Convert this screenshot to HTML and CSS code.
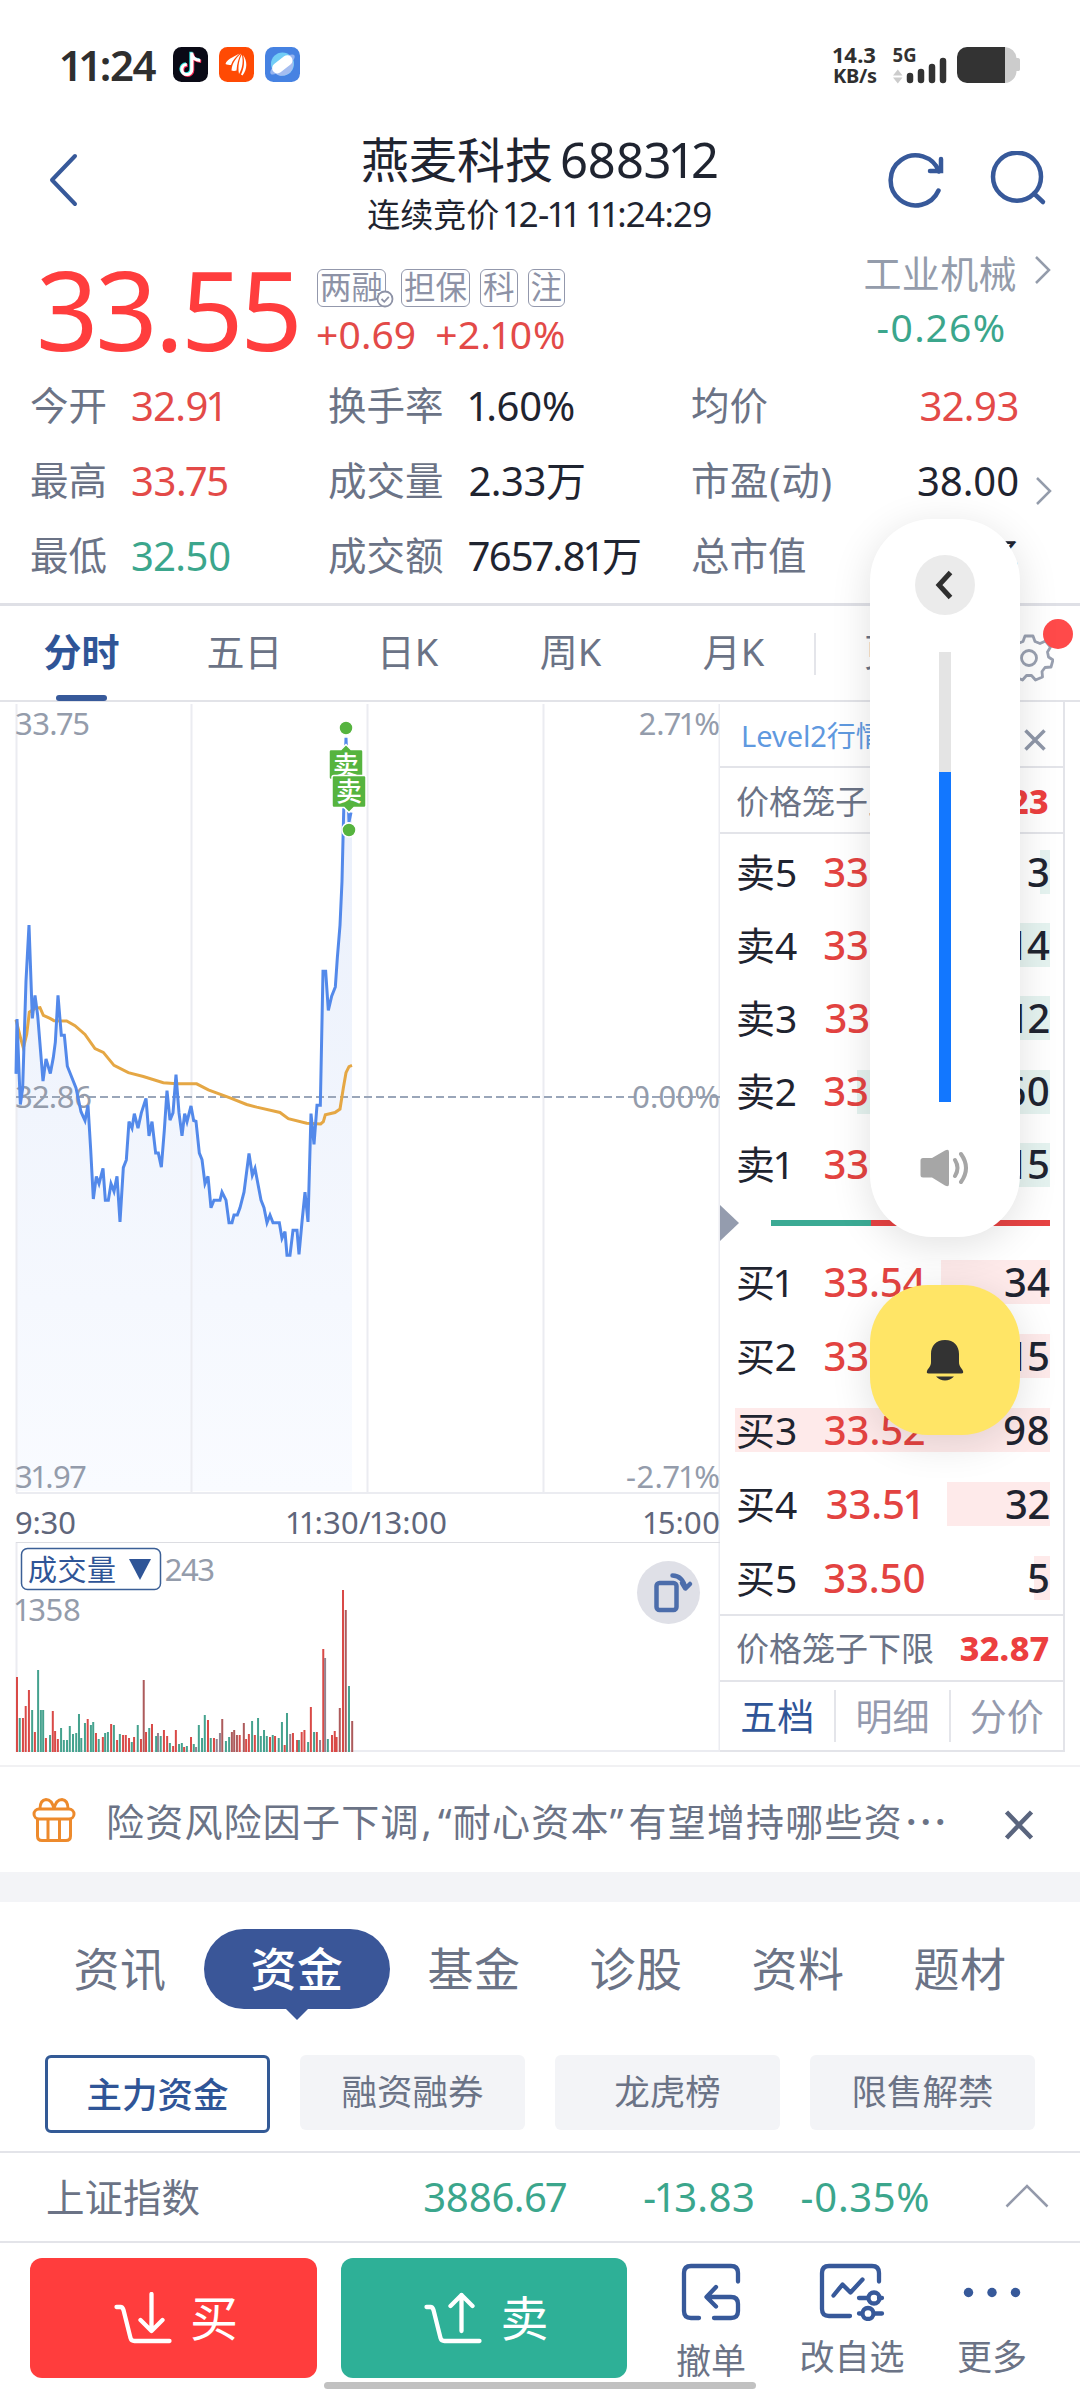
FILE: index.html
```html
<!DOCTYPE html>
<html lang="zh-CN">
<head>
<meta charset="utf-8">
<title>燕麦科技 688312</title>
<link rel="stylesheet" href="styles.css">
</head>
<body>
<div class="screen">
  <header class="status">
    <span class="clock">11:24</span>
    <svg class="app" viewBox="0 0 35 35"><rect width="35" height="35" rx="8.5" fill="#0a0a16"/><g fill="none"><path d="M18.800 5.500v17a5 5 0 1 1-5-5M18.800 7c.8 3.800 4 6.200 8.500 6.500" stroke="#25e5e0" stroke-width="3.200" transform="translate(-.9 -.7)"/><path d="M18.800 5.500v17a5 5 0 1 1-5-5M18.800 7c.8 3.800 4 6.200 8.500 6.500" stroke="#fb2a56" stroke-width="3.200" transform="translate(.9 .9)"/><path d="M18.800 5.500v17a5 5 0 1 1-5-5M18.800 7c.8 3.800 4 6.200 8.500 6.500" stroke="#fff" stroke-width="3.200"/></g></svg>
    <svg class="app" viewBox="0 0 35 35"><rect width="35" height="35" rx="8.500" fill="#ff4a04"/><path fill="#fff" d="M6.500 17C8 12 13 11 20.500 6.500c-4 4-7 7-8.500 11.500-2 0-4-.3-5.500-1ZM12.500 23.500C13 16 17 11 22 6.500c-2.500 5-4 10-4.500 17-1.700.5-3.300.5-5 0ZM20 27C18.500 19 20.500 12 22.800 7.500c1.500 6 1.200 13-2.800 19.500ZM22 27.500c3-6 4-13 2-19.500 4.500 6 4.500 14-.5 20.500z"/></svg>
    <svg class="app" viewBox="0 0 35 35"><rect width="35" height="35" rx="8.500" fill="#4682e2"/><circle cx="17.500" cy="17" r="11.500" fill="#72cdf6"/><path d="M7 23a11.500 11.500 0 0 0 21-9z" fill="#a5bdf0"/><ellipse cx="17.500" cy="17.500" rx="15" ry="5" transform="rotate(-38 17.500 17.500)" fill="#95b4ef"/><rect x="6" y="12" width="23" height="10.500" rx="5.200" transform="rotate(-38 17.500 17.500)" fill="#fff"/></svg>
    <div class="net-speed"><span>14.3</span><span class="unit">KB/s</span></div>
    <svg class="signal" width="50" height="38" viewBox="892 46 50 38"><text x="892.500" y="62" textLength="24" lengthAdjust="spacingAndGlyphs">5G</text><path d="M893 75.500l4.800-6 4.700 6zM893 77.500l4.800 6 4.700-6z" fill="#ccc"/><path d="M910.300 76v4M921.300 72v8M932.300 67v13M943.300 61v19" transform="translate(-.3 0)" stroke="#333" stroke-width="6.500" stroke-linecap="round"/></svg>
    <svg class="battery" width="64" height="36" viewBox="0 0 64 36"><path d="M12 0h36a12 12 0 0 1 11.500 11H61c1.500 0 2 1 2 2v9c0 1.500-.5 2-2 2h-1.500A12 12 0 0 1 48 36H12z" fill="#ccc"/><path d="M10 0h38v36H10A10 10 0 0 1 0 26V10A10 10 0 0 1 10 0z" fill="#333"/></svg>
  </header>

  <nav class="titlebar">
    <svg class="back" width="32" height="56" viewBox="0 0 32 56"><path d="M28 4L5 28l23 24" /></svg>
    <div class="title">
      <h1>燕麦科技<span class="code">688312</span></h1>
      <p>连续竞价<span class="stamp">12-11 11:24:29</span></p>
    </div>
    <svg class="refresh" width="60" height="60" viewBox="886 151 60 60"><path d="M938.500 190.500A25 25 0 1 1 939 171.500"/><path d="M930 171h11v-12" stroke-linejoin="miter"/></svg>
    <svg class="search" width="60" height="60" viewBox="989 151 60 60"><circle cx="1017" cy="176.700" r="24"/><path d="M1034 193.500l9 8.500"/></svg>
  </nav>

  <section class="quote">
    <div class="price">33.55</div>
    <div class="quote-mid">
      <div class="tags"><span class="tag checked">两融<svg viewBox="0 0 18 18"><circle cx="9" cy="9" r="7.500"/><path d="M5.500 9l2.800 2.800 4.500-5"/></svg></span><span class="tag">担保</span><span class="tag">科</span><span class="tag">注</span></div>
      <div class="change"><span>+0.69</span><span class="pct">+2.10%</span></div>
    </div>
    <div class="sector">
      <div>工业机械<svg class="chev" width="18" height="30" viewBox="0 0 18 30"><path d="M2 2l13 13L2 28"/></svg></div>
      <div class="sector-pct">-0.26%</div>
    </div>
  </section>

  <section class="stats">
    <span>今开</span><b class="up">32.91</b><span>换手率</span><b>1.60%</b><span>均价</span><b class="right up">32.93</b><i></i>
    <span>最高</span><b class="up">33.75</b><span>成交量</span><b>2.33万</b><span class="pe">市盈(动)</span><b class="right">38.00</b><i><svg class="chev low" width="18" height="30" viewBox="0 0 18 30"><path d="M2 2l13 13L2 28"/></svg></i>
    <span>最低</span><b class="down">32.50</b><span>成交额</span><b class="long">7657.81万</b><span>总市值</span><b class="right">48.90亿</b><i></i>
  </section>

  <nav class="periods">
    <span class="on">分时</span><span>五日</span><span>日K</span><span>周K</span><span>月K</span><span class="more">更多</span>
    <svg class="gear" width="50" height="50" viewBox="-25 -25 50 50"><path d="M-4-22h8l2 5.500 5 2 5.500-2.500 5 6-3 5 1 5 4.500 3-2 7-6 .5-3 4 .5 5.500-7 3-4-4.500h-5l-4 4.500-7-3 .5-5.500-3-4-6-.5-2-7 4.500-3 1-5-3-5 5-6 5.500 2.500 5-2z"/><circle r="7.500"/></svg>
    <i class="dot"></i>
  </nav>

  <main class="market">
    <svg class="chart" width="720" height="1052" viewBox="0 702 720 1052">
      <defs><linearGradient id="area" x1="0" y1="0" x2="0" y2="1"><stop offset="0" stop-color="#e9effb"/><stop offset="1" stop-color="#f9fbff"/></linearGradient></defs>
      <g transform="translate(0 690) scale(.33333 .3827)">
        <path fill="url(#area)" d="M48 2093V1003L51 860 61 1083 68 1040 78 760 87 614 97 858 105 798 113 850 129 1022 138 964 151 1002 160 960 166 920 174 798 184 902 193 902 202 983 228 1040 243 1102 255 1125 264 1085 272 1200 280 1330 289 1271 297 1290 309 1250 316 1333 325 1333 333 1290 342 1310 351 1271 360 1390 370 1248 379 1228 387 1128 396 1145 403 1107 414 1145 424 1105 438 1067 447 1165 456 1128 467 1210 475 1210 484 1247 493 1150 501 1047 510 1124 519 1105 528 1005 537 1105 546 1165 554 1107 561 1128 573 1087 581 1125 588 1127 598 1210 606 1227 615 1290 624 1271 633 1353 642 1333 660 1333 666 1312 678 1333 687 1392 696 1392 702 1372 712 1372 720 1353 732 1312 747 1211 757 1268 765 1250 783 1333 792 1353 801 1392 810 1372 819 1392 838 1392 846 1433 855 1415 861 1477 870 1477 879 1412 891 1412 897 1475 906 1390 915 1312 924 1390 933 1107 942 1187 951 1085 961 1085 969 735 977 735 985 837 995 800 1006 776 1012 700 1020 615 1026 500 1031 320 1038 100 1047 365 1056 320V2093z"/>
      </g>
      <path d="M16.500 704v789M191.500 704v789M367.500 704v789M543.500 704v789M719.500 704v1048M16 1493h704M16 1751h704M16.500 1542v210" stroke="#ebecf1" stroke-width="2"/>
      <path d="M16 1542.500h704" stroke="#dcdde2"/>
      <path d="M16 1097h704" stroke="#9aa6b9" stroke-width="2" stroke-dasharray="8 4"/>
      <g class="axis">
        <text x="15" y="734.500" textLength="75">33.75</text><text x="15" y="1108" textLength="77">32.86</text><text x="15" y="1488" textLength="71">31.97</text>
        <text x="639" y="734.500" textLength="81">2.71%</text><text x="632" y="1108" textLength="88">0.00%</text><text x="626" y="1488" textLength="94">-2.71%</text>
        <g class="time"><text x="15" y="1534" textLength="61">9:30</text><text x="287" y="1534" textLength="160">11:30/13:00</text><text x="644" y="1534" textLength="76">15:00</text></g>
        <text x="165" y="1581" textLength="50">243</text><text x="15" y="1621" textLength="66">1358</text>
      </g>
      <g transform="translate(0 690) scale(.33333 .3827)" fill="none" stroke-width="3" stroke-linejoin="miter">
        <path class="line" stroke="#e5a744" d="M48 862L62 910 70 935 80 900 88 842 105 832 120 830 130 850 150 858 162 864 200 865 225 877 255 900 285 937 310 947 342 981 385 1000 430 1010 490 1026 530 1029 590 1029 625 1045 690 1066 740 1083 770 1090 840 1104 865 1120 920 1132 962 1134 970 1128 976 1110 1005 1104 1020 1095 1030 1040 1038 1000 1047 984 1056 981"/>
        <path class="line" stroke="#5389ea" d="M48 1003L51 860 61 1083 68 1040 78 760 87 614 97 858 105 798 113 850 129 1022 138 964 151 1002 160 960 166 920 174 798 184 902 193 902 202 983 228 1040 243 1102 255 1125 264 1085 272 1200 280 1330 289 1271 297 1290 309 1250 316 1333 325 1333 333 1290 342 1310 351 1271 360 1390 370 1248 379 1228 387 1128 396 1145 403 1107 414 1145 424 1105 438 1067 447 1165 456 1128 467 1210 475 1210 484 1247 493 1150 501 1047 510 1124 519 1105 528 1005 537 1105 546 1165 554 1107 561 1128 573 1087 581 1125 588 1127 598 1210 606 1227 615 1290 624 1271 633 1353 642 1333 660 1333 666 1312 678 1333 687 1392 696 1392 702 1372 712 1372 720 1353 732 1312 747 1211 757 1268 765 1250 783 1333 792 1353 801 1392 810 1372 819 1392 838 1392 846 1433 855 1415 861 1477 870 1477 879 1412 891 1412 897 1475 906 1390 915 1312 924 1390 933 1107 942 1187 951 1085 961 1085 969 735 977 735 985 837 995 800 1006 776 1012 700 1020 615 1026 500 1031 320 1038 125 1047 345 1053 320"/>
      </g>
      <g fill="#56b43f" stroke="#fff" stroke-width="1.500">
        <circle cx="346" cy="728" r="7"/><path d="M331 749.500h10l5-5 5 5h10q2 0 2 2v26q0 2-2 2h-30q-2 0-2-2v-26q0-2 2-2z"/>
        <text class="mark" x="346" y="775">卖</text>
        <circle cx="349" cy="830" r="7"/><path d="M334 775.500h30q2 0 2 2v28q0 2-2 2h-10l-5 5-5-5h-10q-2 0-2-2v-28q0-2 2-2z"/>
        <text class="mark" x="349" y="801">卖</text>
      </g>
      <g transform="translate(0 1460) scale(.45918 .33333)" fill="none" stroke-width="2">
        <path class="line" stroke="#d94a47" d="M37 876V651M50 876V774M56 876V738M63 876V690M76 876V816M100 876V834M115 876V753M120 876V813M126 876V837M191 876V777M209 876V819M224 876V831M242 876V792M255 876V840M268 876V825M274 876V825M281 876V834M292 876V831M307 876V837M318 876V816M331 876V792M357 876V810M364 876V828M377 876V858M383 876V810M401 876V861M416 876V831M453 876V780M466 876V834M522 876V825M536 876V837M542 876V822M555 876V825M588 876V831M599 876V828M620 876V855M638 876V819M647 876V840M657 876V816M663 876V810M677 876V741M690 876V816M704 876V567M723 876V825M729 876V813M733 876V831M747 876V390"/>
        <path class="line" stroke="#ad5b5c" d="M313 876V660M484 876V777M505 876V816M510 876V810M516 876V825M531 876V789M740 876V744M753 876V450M767 876V783"/>
        <path class="line" stroke="#94828f" d="M472 876V837M479 876V819M632 876V822M697 876V840M708 876V594M344 876V819M427 876V861"/>
        <path class="line" stroke="#45a28e" d="M43 876V774M70 876V750M83 876V630M89 876V750M94 876V750M109 876V825M133 876V804M139 876V840M146 876V840M152 876V798M159 876V822M166 876V819M172 876V762M177 876V834M185 876V789M198 876V795M203 876V786M215 876V837M229 876V819M235 876V816M248 876V795M261 876V822M287 876V846M300 876V795M325 876V804M340 876V828M350 876V828M370 876V849M390 876V852M396 876V849M407 876V858M422 876V852M433 876V795M440 876V834M446 876V765M459 876V834M492 876V843M499 876V831M549 876V783M562 876V774M568 876V828M575 876V810M581 876V828M594 876V825M607 876V834M614 876V786M625 876V759M651 876V840M671 876V846M684 876V816M714 876V837M760 876V678"/>
      </g>
      <rect x="21.500" y="1548.500" width="139" height="41" rx="6" fill="#fff" stroke="#3b5f96" stroke-width="1.500"/>
      <text class="vol" x="28" y="1580.500" textLength="88">成交量</text><path d="M129 1559h22l-11 21z" fill="#2f5597"/>
      <circle cx="668.500" cy="1592.500" r="31.500" fill="#dfe0e7"/>
      <g fill="none" stroke="#4c6dab" stroke-width="4.500" stroke-linecap="round" stroke-linejoin="round"><rect x="656.500" y="1583" width="20" height="27" rx="3"/><path d="M672.500 1575.500q10 0 13 13l4.500-4.500M685 1588l-3-5"/></g>
    </svg>

    <aside class="book">
      <div class="row level"><span>Level2行情</span><svg width="24" height="24" viewBox="0 0 24 24"><path d="M2.500 2.500l19 19m0-19l-19 19"/></svg></div>
      <div class="row cage"><span>价格笼子上限</span><b>34.23</b></div>
      <div class="sells">
        <div class="lv"><i style="width:10px"></i><span>卖5</span><b>33.59</b><em>3</em></div>
        <div class="lv"><i style="width:45px"></i><span>卖4</span><b>33.58</b><em>14</em></div>
        <div class="lv"><i style="width:39px"></i><span>卖3</span><b>33.57</b><em>12</em></div>
        <div class="lv"><i style="width:193px"></i><span>卖2</span><b>33.56</b><em>60</em></div>
        <div class="lv"><i style="width:48px"></i><span>卖1</span><b>33.55</b><em>15</em></div>
      </div>
      <div class="ratio"><svg width="19" height="36" viewBox="0 0 19 36"><path d="M0 0l19 18L0 36z" fill="#949cae"/></svg><i class="g"></i><i class="r"></i></div>
      <div class="buys">
        <div class="lv"><i style="width:109px"></i><span>买1</span><b>33.54</b><em>34</em></div>
        <div class="lv"><i style="width:48px"></i><span>买2</span><b>33.53</b><em>15</em></div>
        <div class="lv"><i style="width:315px"></i><span>买3</span><b>33.52</b><em>98</em></div>
        <div class="lv"><i style="width:103px"></i><span>买4</span><b>33.51</b><em>32</em></div>
        <div class="lv"><i style="width:16px"></i><span>买5</span><b>33.50</b><em>5</em></div>
      </div>
      <div class="row cage low"><span>价格笼子下限</span><b>32.87</b></div>
      <div class="book-tabs"><span class="on">五档</span><span>明细</span><span>分价</span></div>
    </aside>
  </main>

  <section class="news">
    <svg width="44" height="46" viewBox="0 0 44 46"><rect x="2" y="12" width="40" height="10" rx="5"/><path d="M5.500 22v17q0 4.500 4.500 4.500h24q4.500 0 4.500-4.500V22M16 22v21M27.500 22v21M8 12q0-9 6-9.500 6 0 8 9.500 2-9.500 8-9.500 6 .5 6 9.500"/></svg>
    <p>险资风险因子下调<span class="comma">,</span><span class="q">“</span>耐心资本<span class="q end">”</span>有望增持哪些资<span class="dots">···</span></p>
    <svg class="close" width="30" height="30" viewBox="0 0 30 30"><path d="M2.500 2l25 26m0-26l-25 26"/></svg>
  </section>

  <nav class="topics"><span>资讯</span><span class="on">资金</span><span>基金</span><span>诊股</span><span>资料</span><span>题材</span></nav>
  <nav class="chips"><span class="on">主力资金</span><span>融资融券</span><span>龙虎榜</span><span>限售解禁</span></nav>

  <section class="index">
    <span>上证指数</span><b class="n1">3886.67</b><b class="n2">-13.83</b><b class="n3">-0.35%</b>
    <svg width="44" height="24" viewBox="0 0 44 24"><path d="M1.500 22.500L22 2l20.500 20.500"/></svg>
  </section>

  <footer class="actions">
    <button class="buy"><svg width="58" height="52" viewBox="0 0 58 52"><path d="M2.500 15h4q2 0 3 3l7 28q.8 3 4 3h35M37.500 2v36M26.500 28l11 11 11-11"/></svg>买</button>
    <button class="sell"><svg width="58" height="52" viewBox="0 0 58 52"><path d="M2.500 15h4q2 0 3 3l7 28q.8 3 4 3h35M37.500 39V3M26.500 14l11-11 11 11"/></svg>卖</button>
    <div class="act cancel"><svg width="64" height="58" viewBox="0 0 64 58"><path d="M20 55h-8q-7 0-7-7V10q0-7 7-7h40q7 0 7 7v8.500M35 55h17q7 0 7-7V41q0-7-7-7H29M37 24L27.500 34l9.500 9.500"/></svg>撤单</div>
    <div class="act fav"><svg width="66" height="58" viewBox="0 0 66 58"><path d="M31 53H10q-7 0-7-7V10q0-7 7-7h43q7 0 7 7v8.500M14.500 32.500l9-11 8 8 12-13M40 35h8M60 35h3M40 50.500h2M56 50.500h7"/><circle cx="55" cy="35" r="5.500"/><circle cx="49" cy="50.500" r="5.500"/></svg>改自选</div>
    <div class="act etc"><svg width="58" height="58" viewBox="0 0 58 58"><g class="fill"><circle cx="5.500" cy="29.500" r="4.700"/><circle cx="29" cy="29.500" r="4.700"/><circle cx="52.500" cy="29.500" r="4.700"/></g></svg>更多</div>
    <i class="home"></i>
  </footer>

  <div class="volume">
    <svg class="vback" width="60" height="60" viewBox="0 0 60 60"><circle cx="30" cy="30" r="30" fill="#ebebeb"/><path d="M35.500 17.500L24 30l11.500 12.500" fill="none" stroke="#2f2f2f" stroke-width="5"/></svg>
    <div class="track"><i></i></div>
    <svg width="50" height="38" viewBox="0 0 50 38"><path d="M3 9h9L25 1.500q4-2 4 1.500v32q0 3.500-4 1.500L12 28.500H3q-2.500 0-2.500-2.500V11.500Q.5 9 3 9z" fill="#a6a6a6"/><path d="M35 11q5 8 0 16M41 5q10 14 0 28" fill="none" stroke="#a6a6a6" stroke-width="4" stroke-linecap="round"/></svg>
  </div>
  <div class="bell"><svg width="38" height="42" viewBox="0 0 38 42"><path d="M19 1C10 1 5 7 5 15v8c0 5-3 6-4 9-.5 1.800 0 2.500 1.500 2.500h33c1.500 0 2-.7 1.500-2.500-1-3-4-4-4-9v-8C33 7 28 1 19 1zM10 37.500h18q-4 4-9 4t-9-4z" fill="#333"/></svg></div>
</div>
</body>
</html>
```
FILE: styles.css
```css
* { box-sizing: border-box; }
body { margin: 0; background: #fff; font-family: "Noto Sans", "Noto Sans CJK SC", sans-serif; color: #1f2430; }
h1, p { margin: 0; font-weight: 400; }
b, em, i { font-weight: 400; font-style: normal; }
svg { display: block; flex: none; }
.screen { position: relative; width: 1080px; height: 2392px; overflow: hidden; background: #fff; white-space: nowrap; font-variant-numeric: proportional-nums; }
.up { color: #e34a48; }
.down { color: #3ba68c; }

.status { display: flex; height: 120px; padding: 47px 60px 0 61px; color: #2f2f2f; }
.clock { width: 101px; font-size: 42px; font-weight: 600; line-height: 35px; letter-spacing: -1.100px; }
.app { width: 35px; height: 35px; margin: 0 0 0 11px; }
.net-speed { margin-left: auto; width: 44px; margin-right: 15px; font-size: 22px; font-weight: 700; line-height: 15px; display: flex; flex-direction: column; gap: 6px; }
.net-speed .unit { font-size: 20px; letter-spacing: -.3px; }
.signal { font-size: 19px; font-weight: 700; fill: #333; margin: -1px 15px 0 0; overflow: visible; }
.battery { margin-right: -1px; }

.titlebar { display: flex; height: 130px; align-items: flex-start; }
.titlebar svg { fill: none; stroke: #37599a; stroke-width: 4.500px; stroke-linecap: round; stroke-linejoin: round; margin-top: 31px; }
.titlebar .back { margin: 32px 0 0 47px; stroke-width: 4px; }
.title { flex: 1; text-align: center; padding-left: 114px; }
.title h1 { margin-top: 8px; font-size: 48px; line-height: 62px; }
.title .code { font-size: 49px; margin-left: 7px; letter-spacing: -.8px; }
.title p { font-size: 33px; line-height: 46px; }
.title .stamp { font-size: 35px; margin-left: 5px; letter-spacing: -.5px; }
.titlebar .search { margin-left: 43px; margin-right: 31px; }

.quote { display: flex; height: 118px; padding: 0 28px 0 36px; }
.price { width: 281px; font-size: 109px; line-height: 118px; letter-spacing: -3px; color: #ff3d3d; }
.tags { display: flex; gap: 10px; margin-top: 19px; }
.tag { position: relative; height: 38px; padding: 0 2px; font-size: 31.500px; line-height: 34px; border: 1.500px solid #9398ac; border-radius: 6px; color: #8d92a6; }
.tag.checked { margin-right: 5px; }
.tag svg { position: absolute; right: -9px; bottom: -2px; width: 18px; height: 18px; fill: #fff; stroke: #8d92a6; stroke-width: 1.800px; }
.change { display: flex; gap: 19px; color: #e34a48; font-size: 39px; line-height: 54px; margin-left: -1px; }
.change .pct { letter-spacing: .7px; }
.sector { margin-left: auto; font-size: 38px; line-height: 46px; color: #949cab; letter-spacing: .4px; }
.sector > div:first-child { display: flex; align-items: center; }
.chev { fill: none; stroke: #949cab; stroke-width: 2.500px; margin-left: 17px; margin-top: -6px; }
.sector-pct { margin-top: 8px; margin-left: 13px; font-size: 39px; color: #3ba68c; letter-spacing: 1.300px; }

.stats { display: grid; grid-template-columns: 101px 197px 141px 222px 150px 178px 1fr; grid-auto-rows: 75px; height: 235px; padding: 0 0 0 30px; font-size: 38.500px; line-height: 75px; align-items: center; }
.stats span { color: #6b7386; }
.stats b { font-size: 40px; letter-spacing: -.4px; }
.stats .long { letter-spacing: -.8px; }
.stats .pe { letter-spacing: .6px; }
.stats .right { text-align: right; }
.stats i { padding-left: 0; }
.chev.low { margin-top: 20px; margin-left: 16px; }

.periods { position: relative; display: flex; height: 99px; border-top: 3px solid #dfe0e6; border-bottom: 2px solid #e2e3e8; font-size: 38px; line-height: 90px; color: #6b7386; }
.periods span { width: 163px; text-align: center; }
.periods .on { color: #2f5597; font-weight: 700; position: relative; }
.periods .on::after { content: ""; position: absolute; left: 56px; bottom: -1px; width: 51px; height: 6px; border-radius: 3px; background: #37599a; }
.periods .more { width: 130px; padding-left: 50px; text-align: left; background: linear-gradient(#e4e5ea, #e4e5ea) 0 27px / 2px 42px no-repeat; margin-left: -1px; }
.gear { margin: 27px 0 0 60px; fill: none; stroke: #99a0b0; stroke-width: 2.800px; stroke-linejoin: round; }
.dot { position: absolute; left: 1043px; top: 13px; width: 30px; height: 30px; border-radius: 50%; background: #ff4a4a; }

.market { display: flex; height: 1065px; border-bottom: 2px solid #f1f1f3; }
.chart .line { vector-effect: non-scaling-stroke; }
.axis { font-size: 31px; fill: #949cab; }
.axis .time { fill: #5f667b; }
.mark { font-size: 26px; fill: #fff; stroke: none; text-anchor: middle; font-weight: 500; }
.vol { font-size: 29px; fill: #2f5597; }

.book { width: 345px; height: 1050px; border-right: 2px solid #e3e4e9; border-bottom: 2px solid #e3e4e9; }
.row { display: flex; justify-content: space-between; height: 66px; padding: 0 14px 0 16px; border-bottom: 2px solid #e3e4e9; line-height: 67px; }
.level { padding: 0 16px 0 21px; font-size: 29px; line-height: 68px; color: #5f99df; }
.level svg { margin-top: 26px; fill: none; stroke: #8f97a8; stroke-width: 3.500px; }
.cage { font-size: 33px; color: #6b7386; }
.cage b { color: #ec3f3f; font-weight: 800; font-size: 34px; letter-spacing: .3px; }
.sells { padding-top: 1px; }
.sells .lv { height: 73.200px; }
.lv { position: relative; display: flex; align-items: center; height: 74px; margin: 0 13px 0 15px; font-size: 40px; line-height: 60px; }
.lv i { position: absolute; right: 0; top: 15px; height: 44px; background: #e5f3f0; }
.buys .lv i { background: #feeaea; }
.lv span { position: relative; width: 78px; padding-left: 1px; font-size: 39px; }
.lv b { position: relative; width: 123px; text-align: center; color: #e34341; font-weight: 500; letter-spacing: -.1px; }
.lv em { position: relative; margin-left: auto; font-weight: 500; }
.ratio { display: flex; align-items: center; height: 44px; }
.ratio .g { width: 100px; height: 6px; margin-left: 32px; background: #3baa94; }
.ratio .r { width: 179px; height: 6px; background: #e64343; }
.cage.low { margin-top: -1px; border-top: 2px solid #e3e4e9; height: 68px; line-height: 65px; }
.book-tabs { display: flex; height: 68px; align-items: center; font-size: 37px; color: #949aae; }
.book-tabs span { width: 115px; height: 52px; line-height: 54px; text-align: center; border-left: 2px solid #e4e5ea; }
.book-tabs .on { color: #2f5597; border: 0; }

.news { display: flex; height: 135px; padding: 0 46px 0 32px; align-items: center; border-bottom: 30px solid #f3f4f7; font-size: 38px; letter-spacing: 1.200px; color: #6b7386; }
.news svg { fill: none; stroke: #ed8a2c; stroke-width: 3px; }
.news p { margin-left: 30px; line-height: 105px; padding-top: 3px; }
.news .comma { padding-left: 2px; padding-right: 5px; }
.news .q { padding-right: 0; }
.news .end { padding-right: 4px; }
.news .dots { letter-spacing: 4px; padding-left: 3px; font-weight: 600; }
.news .close { margin-left: auto; margin-top: 11px; stroke: #5a657e; stroke-width: 4.500px; }

.topics { display: flex; height: 120px; padding: 27px 39px 0; font-size: 46px; line-height: 79px; color: #6b7386; }
.topics span { width: 162px; height: 80px; text-align: center; letter-spacing: .5px; }
.topics .on { position: relative; width: 186px; margin: 0 3px; border-radius: 40px; background: #3a5698; color: #fff; font-weight: 500; }
.topics .on::after { content: ""; position: absolute; left: 81px; top: 79px; border: 12px solid transparent; border-top-color: #3a5698; border-bottom: 0; }
.chips { display: flex; gap: 30px; height: 129px; padding: 33px 45px 0; font-size: 35.500px; line-height: 73px; color: #6b7386; }
.chips span { width: 225px; height: 75px; border-radius: 6px; background: #f3f4f7; text-align: center; }
.chips .on { height: 78px; line-height: 72px; border: 3px solid #335a96; color: #2f5597; background: #fff; font-weight: 500; }

.index { display: flex; height: 92px; border-top: 2px solid #e3e4e9; border-bottom: 2px solid #e3e4e9; line-height: 92px; font-size: 38.500px; padding-left: 46px; color: #6b7386; align-items: center; }
.index b { color: #3ba68c; font-size: 40px; text-align: right; letter-spacing: -.6px; }
.index .n1 { width: 366px; }
.index .n2 { width: 189px; letter-spacing: .2px; }
.index .n3 { width: 175px; letter-spacing: .6px; }
.index svg { margin-left: 75px; margin-top: -3px; fill: none; stroke: #949aab; stroke-width: 2.500px; }

.actions { position: relative; display: flex; height: 149px; padding: 15px 0 0 30px; color: #6b7386; }
.actions button { display: flex; align-items: center; justify-content: center; gap: 18px; width: 287px; height: 120px; margin-right: 24px; padding: 0 0 0 5px; border: 0; border-radius: 12px; color: #fff; font-family: inherit; font-size: 48px; line-height: 60px; }
.actions svg { fill: none; stroke: #37599a; stroke-width: 4.300px; stroke-linecap: round; stroke-linejoin: round; }
.actions button svg { stroke: #fff; }
.actions .fill { fill: #37599a; stroke: none; }
.buy { background: #ff3d3d; }
.actions .sell { width: 286px; background: #2eb097; margin-right: 0; }
.act { display: flex; flex-direction: column; align-items: center; font-size: 35px; line-height: 44px; padding-top: 5px; }
.cancel { width: 70px; margin-left: 49px; gap: 18px; }
.act.fav { width: 106px; margin-left: 53px; gap: 14px; }
.act.etc { width: 70px; margin-left: 52px; gap: 14px; }
.home { position: absolute; left: 324px; top: 139px; width: 432px; height: 7px; border-radius: 4px; background: #c1c1c1; }

.volume { position: absolute; left: 870px; top: 519px; width: 150px; height: 718px; border-radius: 62px; background: #fff; box-shadow: 0 8px 40px rgba(0, 0, 0, .12); display: flex; flex-direction: column; align-items: center; padding-top: 36px; }
.track { width: 12px; height: 450px; margin: 37px 0 47px; padding-top: 120px; background: #e4e4e4; }
.track i { display: block; height: 330px; background: #1277ff; }
.bell { position: absolute; left: 870px; top: 1285px; width: 150px; height: 150px; border-radius: 58px; background: #ffe566; box-shadow: 0 8px 40px rgba(0, 0, 0, .12); display: flex; align-items: center; justify-content: center; }
```
